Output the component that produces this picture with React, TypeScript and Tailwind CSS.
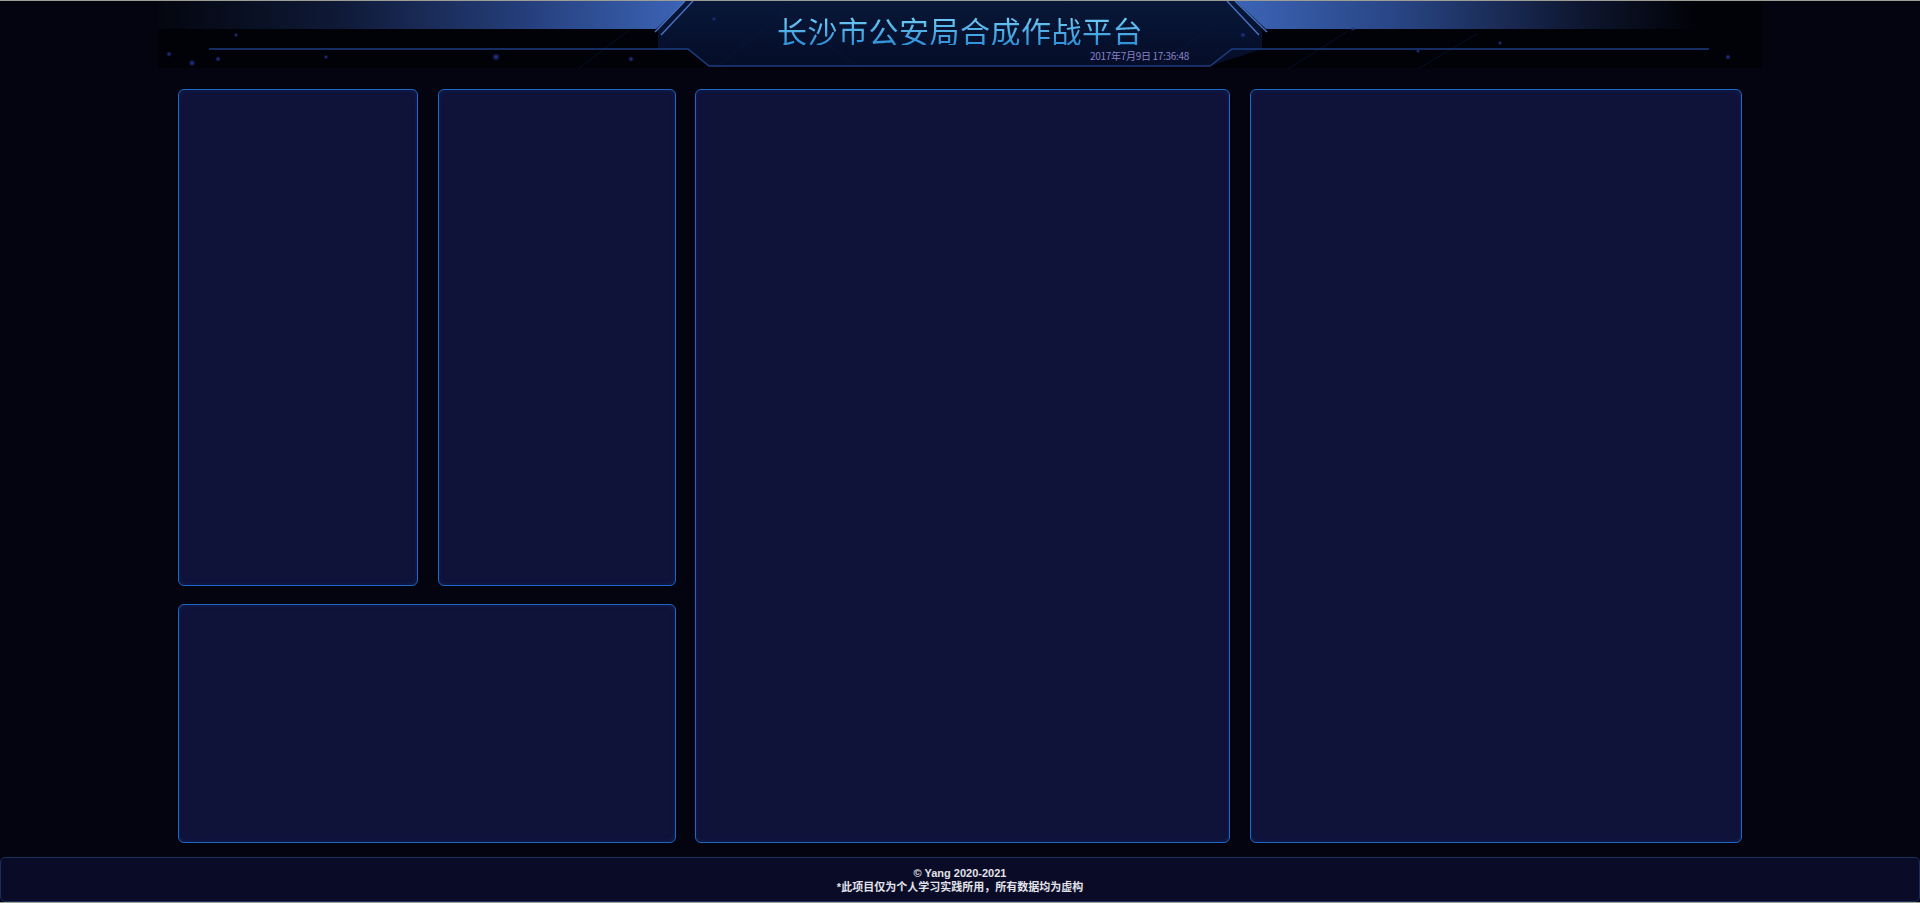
import type { ReactNode } from "react";

/* Dark command-center dashboard shell: decorative header, empty panels, footer. */

const dots: [number, number, number][] = [
  [11, 53, 2.5],
  [34, 62, 3],
  [60, 58, 2.5],
  [78, 34, 2],
  [168, 56, 2],
  [338, 56, 3.5],
  [473, 58, 2.5],
  [556, 18, 2],
  [1085, 34, 2.5],
  [1195, 28, 2],
  [1260, 50, 2],
  [1342, 42, 2],
  [1570, 56, 2.5],
];

function HeaderArt() {
  return (
    <svg
      className="absolute inset-0"
      width="1604"
      height="68"
      viewBox="0 0 1604 68"
      fill="none"
    >
      <defs>
        <linearGradient id="barL" x1="0" x2="1" y1="0" y2="0">
          <stop offset="0" stopColor="#04060f" />
          <stop offset="0.35" stopColor="#0f1a38" />
          <stop offset="0.7" stopColor="#253f7c" />
          <stop offset="1" stopColor="#3c64b6" />
        </linearGradient>
        <linearGradient id="barR" x1="0" x2="1" y1="0" y2="0">
          <stop offset="0" stopColor="#3c64b6" />
          <stop offset="0.35" stopColor="#284584" />
          <stop offset="0.75" stopColor="#0e1630" />
          <stop offset="1" stopColor="#010206" />
        </linearGradient>
        <linearGradient id="mid" x1="0" x2="0" y1="0" y2="1">
          <stop offset="0" stopColor="#081739" />
          <stop offset="1" stopColor="#050d27" />
        </linearGradient>
        <radialGradient id="dot">
          <stop offset="0" stopColor="#2a3aa0" />
          <stop offset="1" stopColor="#1a2470" stopOpacity="0.3" />
        </radialGradient>
      </defs>

      {/* center plate */}
      <polygon
        points="500,0 1104,0 1104,48 1052,65 551,65 530,48 500,48"
        fill="url(#mid)"
      />
      {/* faint network lines */}
      <g stroke="#0d1c44" strokeWidth="1" opacity="0.5">
        <line x1="560" y1="65" x2="640" y2="0" />
        <line x1="700" y1="65" x2="620" y2="10" />
        <line x1="900" y1="0" x2="980" y2="65" />
        <line x1="1000" y1="65" x2="1060" y2="20" />
        <line x1="420" y1="68" x2="470" y2="30" />
        <line x1="1130" y1="68" x2="1190" y2="30" />
        <line x1="1260" y1="68" x2="1320" y2="32" />
      </g>

      {/* top bars */}
      <polygon points="0,0 527,0 498,28 0,28" fill="url(#barL)" />
      <polygon points="1078,0 1540,0 1540,28 1108,28" fill="url(#barR)" />

      {/* double diagonals */}
      <g stroke="#4a72c4" strokeWidth="1.4">
        <line x1="527" y1="0" x2="497" y2="31" />
        <line x1="535" y1="0" x2="503" y2="34" />
        <line x1="1069" y1="0" x2="1101" y2="34" />
        <line x1="1077" y1="0" x2="1109" y2="31" />
      </g>

      {/* base rail */}
      <polyline
        points="51,48 530,48 551,65 1052,65 1074,48 1551,48"
        stroke="#1d3d80"
        strokeWidth="1.5"
      />

      {dots.map(([x, y, r], i) => (
        <circle key={i} cx={x} cy={y} r={r} fill="url(#dot)" />
      ))}
    </svg>
  );
}

function Panel({ className = "" }: { className?: string }) {
  return (
    <div
      className={`rounded-md border border-[#1a68c8] bg-[#0f1239] shadow-[inset_0_0_6px_rgba(30,110,220,0.12)] ${className}`}
    />
  );
}

function Footer({ children }: { children: ReactNode }) {
  return (
    <footer className="flex h-[45px] flex-col items-center justify-center rounded-[5px] border border-[#17305c] bg-[#0a0c27] text-[11px] font-bold leading-[14px] text-[#e2e2ea]">
      {children}
    </footer>
  );
}

export default function App() {
  return (
    <div
      className="flex h-[903px] flex-col overflow-hidden border-y border-[#9d9d96] bg-[#03040f]"
      style={{ fontFamily: '"Liberation Sans", "Noto Sans CJK SC", sans-serif' }}
    >
      <header className="relative mx-auto h-[67px] w-[1604px] shrink-0 bg-[#010208]">
        <HeaderArt />
        <div className="relative flex flex-col items-center pt-[14px]">
          <h1
            className="bg-gradient-to-b from-[#74d2f6] to-[#2e8fd8] bg-clip-text text-[30px] leading-[30px] tracking-[0.5px] text-transparent"
            style={{ fontFamily: '"Noto Sans CJK SC", sans-serif' }}
          >
            长沙市公安局合成作战平台
          </h1>
          <div
            className="mt-[5px] w-[458px] text-right text-[10px] leading-[12px] tracking-[-0.3px] text-[#8a80c8]"
            style={{ fontFamily: '"Noto Sans CJK SC", sans-serif' }}
          >
            2017年7月9日 17:36:48
          </div>
        </div>
      </header>

      <main className="mx-auto mt-[21px] flex h-[754px] w-[1564px] shrink-0 gap-[19px]">
        <div className="flex w-[498px] flex-col gap-[18px]">
          <div className="flex h-[497px] gap-[20px]">
            <Panel className="w-[240px]" />
            <Panel className="flex-1" />
          </div>
          <Panel className="flex-1" />
        </div>
        <Panel className="w-[535px]" />
        <Panel className="ml-[1px] flex-1" />
      </main>

      <div className="mt-[14px]">
        <Footer>
          <span>© Yang 2020-2021</span>
          <span>*此项目仅为个人学习实践所用，所有数据均为虚构</span>
        </Footer>
      </div>
    </div>
  );
}
